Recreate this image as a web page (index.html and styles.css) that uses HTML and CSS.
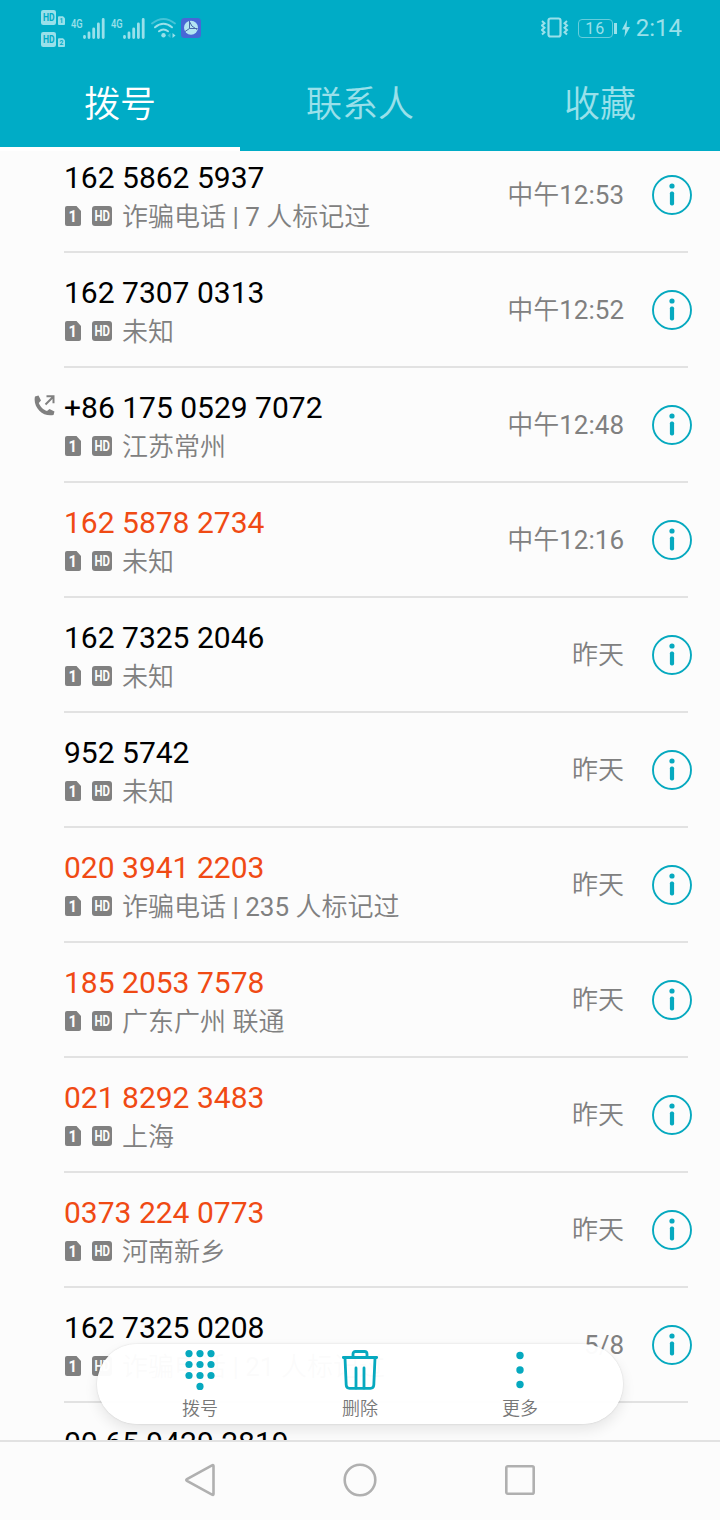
FILE: index.html
```html
<!DOCTYPE html>
<html lang="zh-CN">
<head>
    <meta charset="UTF-8">
    <meta name="viewport" content="width=device-width, initial-scale=1">
    <title>拨号</title>
    <link rel="stylesheet" href="styles.css">
</head>
<body>
    <svg class="defs" width="0" height="0">
        <symbol id="icon-info" viewBox="0 0 40 40">
            <circle cx="20" cy="20" r="19" fill="none" stroke="currentColor" stroke-width="1.9"/>
            <circle cx="20" cy="11" r="2.6" fill="currentColor"/>
            <rect x="17.9" y="16.5" width="4.2" height="14" rx="1.8" fill="currentColor"/>
        </symbol>
        <symbol id="icon-signal" viewBox="0 0 22 21">
            <path d="M1.5 18.5v1M6 15v4.5M10.7 11v8.5M15.4 6v13.5M20.2 1.5v18" fill="none" stroke="currentColor" stroke-width="2.8" stroke-linecap="round"/>
        </symbol>
        <symbol id="icon-hd" viewBox="0 0 20 20">
            <rect width="20" height="20" rx="3" fill="currentColor"/>
            <text class="badge-text" x="2.5" y="15" font-size="14" textLength="15.5" lengthAdjust="spacingAndGlyphs">HD</text>
        </symbol>
        <symbol id="icon-card1" viewBox="0 0 16 20">
            <path d="M2 0h9.5L16 5v13q0 2-2 2H2q-2 0-2-2V2q0-2 2-2z" fill="currentColor"/>
            <text class="badge-text" x="3.4" y="15.7" font-size="17" textLength="8.5" lengthAdjust="spacingAndGlyphs">1</text>
        </symbol>
        <symbol id="icon-card2" viewBox="0 0 16 20">
            <path d="M2 0h9.5L16 5v13q0 2-2 2H2q-2 0-2-2V2q0-2 2-2z" fill="currentColor"/>
            <text class="badge-text" x="3.4" y="15.7" font-size="17" textLength="9" lengthAdjust="spacingAndGlyphs">2</text>
        </symbol>
    </svg>

    <div class="phone">
        <header class="header">
            <div class="status-bar">
                <div class="sims">
                    <div class="sim"><svg width="15" height="15"><use href="#icon-hd"/></svg><svg width="7" height="9"><use href="#icon-card1"/></svg></div>
                    <div class="sim"><svg width="15" height="15"><use href="#icon-hd"/></svg><svg width="7" height="9"><use href="#icon-card2"/></svg></div>
                </div>
                <div class="network"><span>4G</span><svg width="22" height="21"><use href="#icon-signal"/></svg></div>
                <div class="network"><span>4G</span><svg width="22" height="21"><use href="#icon-signal"/></svg></div>
                <svg class="wifi" width="26" height="20" viewBox="0 0 26 20" fill="none" stroke="currentColor" stroke-linecap="round">
                    <path d="M1 5.5Q12.500-3.500 24 5.500" stroke-width="1.800" opacity=".45"/>
                    <path d="M4 9.300Q12.500 2.300 21 9.300" stroke-width="2"/>
                    <path d="M8 13.300Q12.500 9.700 17 13.300" stroke-width="2"/>
                    <circle cx="12.500" cy="17.300" r="2.200" fill="currentColor" stroke="none"/>
                    <path d="M19.500 15v5l-3-2.500z" fill="currentColor" stroke="none" opacity=".4"/>
                    <path d="M21.500 15v5l3-2.500z" fill="currentColor" stroke="none"/>
                </svg>
                <svg class="app" width="20" height="20" viewBox="0 0 20 20">
                    <rect width="20" height="20" rx="3.5" fill="#4867d6"/>
                    <circle cx="10" cy="9.700" r="7" fill="#b4e5f2"/>
                    <path d="M8.500 3v7.500L4 13.500M8.500 10.500h8M8.500 3.500q1 5 7.500 8" fill="none" stroke="#4867a9" stroke-width="1"/>
                </svg>
                <svg class="vibrate" width="28" height="22" viewBox="0 0 28 22" fill="none" stroke="currentColor">
                    <rect x="7.5" y="1.5" width="12" height="18" rx="2" stroke-width="2.2"/>
                    <path d="M1 4l2.500 2.200L1 8.500l2.500 2.200L1 13l2.500 2.200L1 17.500M26 4l-2.500 2.200L26 8.500l-2.500 2.200L26 13l-2.500 2.200L26 17.500" stroke-width="2"/>
                </svg>
                <span class="battery">16</span>
                <svg class="bolt" width="8" height="17" viewBox="0 0 8 17"><path d="M5 0L0 9.500h3.200L2.500 17 8 7H4.600z" fill="currentColor"/></svg>
                <span class="clock">2:14</span>
            </div>
            <nav class="tabs">
                <a class="tab active">拨号</a>
                <a class="tab">联系人</a>
                <a class="tab">收藏</a>
            </nav>
        </header>

        <main class="call-list">
            <div class="call">
                <div class="call-main">
                    <div class="number">162 5862 5937</div>
                    <div class="detail"><svg class="card"><use href="#icon-card1"/></svg><svg class="hd"><use href="#icon-hd"/></svg>诈骗电话 | 7 人标记过</div>
                </div>
                <span class="time">中午12:53</span>
                <svg class="info"><use href="#icon-info"/></svg>
            </div>
            <div class="call">
                <div class="call-main">
                    <div class="number">162 7307 0313</div>
                    <div class="detail"><svg class="card"><use href="#icon-card1"/></svg><svg class="hd"><use href="#icon-hd"/></svg>未知</div>
                </div>
                <span class="time">中午12:52</span>
                <svg class="info"><use href="#icon-info"/></svg>
            </div>
            <div class="call">
                <svg class="outgoing" width="21" height="21" viewBox="0 0 21 21">
                    <path d="M1 1.500L4.500.5 7 5.500 4.800 8C6 11.500 9.500 15 13 16l2.500-2 5 2.500-1 3.500C9 22.500-1.500 12 1 1.500z" fill="currentColor"/>
                    <path d="M11.500 9.500l8-8M12.500 1.300h7v7" fill="none" stroke="currentColor" stroke-width="2"/>
                </svg>
                <div class="call-main">
                    <div class="number">+86 175 0529 7072</div>
                    <div class="detail"><svg class="card"><use href="#icon-card1"/></svg><svg class="hd"><use href="#icon-hd"/></svg>江苏常州</div>
                </div>
                <span class="time">中午12:48</span>
                <svg class="info"><use href="#icon-info"/></svg>
            </div>
            <div class="call missed">
                <div class="call-main">
                    <div class="number">162 5878 2734</div>
                    <div class="detail"><svg class="card"><use href="#icon-card1"/></svg><svg class="hd"><use href="#icon-hd"/></svg>未知</div>
                </div>
                <span class="time">中午12:16</span>
                <svg class="info"><use href="#icon-info"/></svg>
            </div>
            <div class="call">
                <div class="call-main">
                    <div class="number">162 7325 2046</div>
                    <div class="detail"><svg class="card"><use href="#icon-card1"/></svg><svg class="hd"><use href="#icon-hd"/></svg>未知</div>
                </div>
                <span class="time">昨天</span>
                <svg class="info"><use href="#icon-info"/></svg>
            </div>
            <div class="call">
                <div class="call-main">
                    <div class="number">952 5742</div>
                    <div class="detail"><svg class="card"><use href="#icon-card1"/></svg><svg class="hd"><use href="#icon-hd"/></svg>未知</div>
                </div>
                <span class="time">昨天</span>
                <svg class="info"><use href="#icon-info"/></svg>
            </div>
            <div class="call missed">
                <div class="call-main">
                    <div class="number">020 3941 2203</div>
                    <div class="detail"><svg class="card"><use href="#icon-card1"/></svg><svg class="hd"><use href="#icon-hd"/></svg>诈骗电话 | 235 人标记过</div>
                </div>
                <span class="time">昨天</span>
                <svg class="info"><use href="#icon-info"/></svg>
            </div>
            <div class="call missed">
                <div class="call-main">
                    <div class="number">185 2053 7578</div>
                    <div class="detail"><svg class="card"><use href="#icon-card1"/></svg><svg class="hd"><use href="#icon-hd"/></svg>广东广州 联通</div>
                </div>
                <span class="time">昨天</span>
                <svg class="info"><use href="#icon-info"/></svg>
            </div>
            <div class="call missed">
                <div class="call-main">
                    <div class="number">021 8292 3483</div>
                    <div class="detail"><svg class="card"><use href="#icon-card1"/></svg><svg class="hd"><use href="#icon-hd"/></svg>上海</div>
                </div>
                <span class="time">昨天</span>
                <svg class="info"><use href="#icon-info"/></svg>
            </div>
            <div class="call missed">
                <div class="call-main">
                    <div class="number">0373 224 0773</div>
                    <div class="detail"><svg class="card"><use href="#icon-card1"/></svg><svg class="hd"><use href="#icon-hd"/></svg>河南新乡</div>
                </div>
                <span class="time">昨天</span>
                <svg class="info"><use href="#icon-info"/></svg>
            </div>
            <div class="call">
                <div class="call-main">
                    <div class="number">162 7325 0208</div>
                    <div class="detail"><svg class="card"><use href="#icon-card1"/></svg><svg class="hd"><use href="#icon-hd"/></svg>诈骗电话 | 21 人标记过</div>
                </div>
                <span class="time">5/8</span>
                <svg class="info"><use href="#icon-info"/></svg>
            </div>
            <div class="call">
                <div class="call-main">
                    <div class="number">00 65 9429 2819</div>
                </div>
            </div>

            <div class="toolbar">
                <div class="tool">
                    <svg width="40" height="40" viewBox="0 0 40 40" fill="currentColor">
                        <circle cx="9" cy="3.6" r="3.6"/><circle cx="20" cy="3.6" r="3.6"/><circle cx="31" cy="3.6" r="3.6"/>
                        <circle cx="9" cy="14.5" r="3.6"/><circle cx="20" cy="14.5" r="3.6"/><circle cx="31" cy="14.5" r="3.6"/>
                        <circle cx="9" cy="25.5" r="3.6"/><circle cx="20" cy="25.5" r="3.6"/><circle cx="31" cy="25.5" r="3.6"/>
                        <circle cx="20" cy="36.4" r="3.6"/>
                    </svg>
                    <span>拨号</span>
                </div>
                <div class="tool">
                    <svg width="40" height="40" viewBox="0 0 40 40" fill="none" stroke="currentColor" stroke-width="2.8" stroke-linecap="round">
                        <path d="M3.300 7.500h33.400M13 7V4q0-2.500 2.500-2.500h9Q27 1.500 27 4v3"/>
                        <path d="M5 8l1.200 27q.2 3.300 3.300 3.300h21q3.100 0 3.300-3.300L35 8"/>
                        <path d="M16 18v20M24 18v20"/>
                    </svg>
                    <span>删除</span>
                </div>
                <div class="tool">
                    <svg width="40" height="40" viewBox="0 0 40 40" fill="currentColor">
                        <circle cx="20" cy="5.5" r="3.7"/><circle cx="20" cy="20" r="3.7"/><circle cx="20" cy="34.5" r="3.7"/>
                    </svg>
                    <span>更多</span>
                </div>
            </div>
        </main>

        <footer class="nav-bar">
            <svg width="34" height="34" viewBox="0 0 34 34"><path d="M29 2.300q1.500-.8 1.500.7v28q0 1.500-1.500.7L4 18q-1.500-1 0-2z"/></svg>
            <svg width="34" height="34" viewBox="0 0 34 34"><circle cx="17" cy="17" r="15.300"/></svg>
            <svg width="34" height="34" viewBox="0 0 34 34"><rect x="3.300" y="3.300" width="27.400" height="27.400" rx="1.500"/></svg>
        </footer>
    </div>
</body>
</html>
```
FILE: styles.css
```css
* {
    box-sizing: border-box;
}
body {
    margin: 0;
    font-family: Roboto, "Noto Sans CJK SC DemiLight", "Noto Sans CJK SC", sans-serif;
    background: #fcfcfc;
}
svg {
    display: block;
    flex: none;
}
.defs {
    position: absolute;
}
.badge-text {
    fill: var(--badge-text);
    font-weight: bold;
}
.phone {
    display: flex;
    flex-direction: column;
    width: 720px;
    height: 1520px;
    overflow: hidden;
}

/* header */
.header {
    --badge-text: #00acc6;
    flex: none;
    height: 151px;
    background: #00acc6;
    color: #99e0ea;
}
.status-bar {
    display: flex;
    align-items: center;
    height: 56px;
    padding: 0 38px 0 41px;
}
.sims {
    display: flex;
    flex-direction: column;
    gap: 7px;
    width: 25px;
    margin-right: 5px;
}
.sim {
    display: flex;
    align-items: flex-end;
    gap: 2px;
    height: 15px;
}
.network {
    display: flex;
    width: 40px;
    height: 21px;
}
.network span {
    width: 12px;
    font-size: 13px;
    line-height: 11px;
    font-weight: 500;
    transform: scaleX(.72);
    transform-origin: 0 0;
}
.wifi {
    margin-left: 0;
}
.app {
    margin-left: 4px;
}
.vibrate {
    margin-left: auto;
}
.battery {
    position: relative;
    width: 35px;
    height: 19px;
    margin: 0 9px 0 9px;
    border: 1px solid #66cddc;
    border-radius: 4px;
    font-size: 16px;
    line-height: 18px;
    letter-spacing: 1px;
    text-align: center;
}
.battery::after {
    content: "";
    position: absolute;
    top: 3px;
    right: -5px;
    width: 3px;
    height: 11px;
    background: #99e0ea;
}
.clock {
    margin-left: 6px;
    font-size: 24px;
    line-height: 28px;
}
.tabs {
    display: flex;
    height: 95px;
}
.tab {
    flex: 1;
    padding-top: 22px;
    font-size: 36px;
    line-height: 54px;
    text-align: center;
}
.tab.active {
    border-bottom: 4px solid #fff;
    color: #fff;
}

/* call log */
.call-list {
    --badge-text: #fcfcfc;
    position: relative;
    flex: 1;
    min-height: 0;
    overflow: hidden;
}
.call {
    display: flex;
    align-items: center;
    height: 115px;
    margin: 0 32px 0 64px;
    border-bottom: 2px solid #e2e2e2;
    color: #808080;
}
.call:first-child {
    margin-top: -13px;
}
.call-main {
    flex: 1;
    align-self: flex-start;
    padding-top: 20px;
}
.number {
    color: #000;
    font-size: 30px;
    line-height: 39px;
}
.missed .number {
    color: #f04a14;
}
.detail {
    display: flex;
    align-items: center;
    padding-top: 1px;
    font-size: 26px;
    line-height: 39px;
    white-space: nowrap;
}
.card {
    width: 16px;
    height: 20px;
    margin: 0 11px 3px 1px;
}
.hd {
    width: 20px;
    height: 20px;
    margin: 0 10px 3px 0;
}
.time {
    font-size: 26px;
    line-height: 38px;
}
.info {
    width: 40px;
    height: 40px;
    margin: 1px -4px 0 28px;
    color: #06a9bf;
}
.outgoing {
    align-self: flex-start;
    margin: 27px 9px 0 -30px;
}

/* floating toolbar */
.toolbar {
    position: absolute;
    left: 97px;
    bottom: 16px;
    display: flex;
    justify-content: center;
    width: 526px;
    height: 80px;
    border-radius: 40px;
    background: rgba(255, 255, 255, .97);
    box-shadow: 0 0 2px rgba(0, 0, 0, .15), 0 6px 14px rgba(0, 0, 0, .09);
}
.tool {
    display: flex;
    flex-direction: column;
    align-items: center;
    width: 160px;
    padding-top: 6px;
    color: #06a9bf;
}
.tool span {
    margin-top: 5px;
    color: #777;
    font-size: 18px;
    line-height: 27px;
}

/* system navigation */
.nav-bar {
    display: flex;
    flex: none;
    align-items: center;
    justify-content: center;
    gap: 126px;
    height: 80px;
    padding-bottom: 2px;
    border-top: 2px solid #e2e2e2;
    background: #fcfcfc;
}
.nav-bar svg {
    fill: none;
    stroke: #b0b0b0;
    stroke-width: 2.6;
}
```
